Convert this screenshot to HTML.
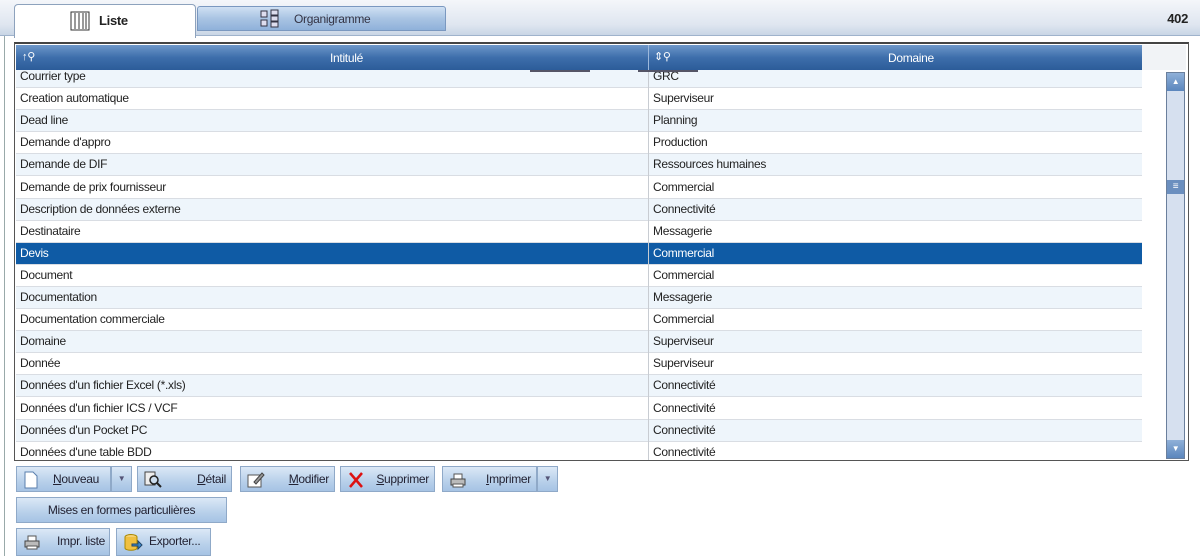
<!DOCTYPE html>
<html><head><meta charset="utf-8"><style>
*{margin:0;padding:0;box-sizing:border-box}
html,body{width:1200px;height:556px;overflow:hidden}
body{background:#fff;font-family:"Liberation Sans",Arial,sans-serif;font-size:12px;color:#222;position:relative;letter-spacing:-0.3px}
.abs{position:absolute;white-space:nowrap}
.bar{left:0;top:0;width:1200px;height:36px;background:linear-gradient(#f4f6fa,#dfe6f0 70%,#c9d6e6);border-bottom:1px solid #9fb3cc}
.tab1{left:14px;top:4px;width:182px;height:34px;background:#fff;border:1px solid #8da2bd;border-bottom:none;border-radius:4px 4px 0 0;font-weight:bold;font-size:13px}
.tab2{left:197px;top:6px;width:249px;height:25px;background:linear-gradient(#cfe0f3,#a9c4e3 50%,#8fb1da);border:1px solid #7a98c0;border-radius:3px 3px 0 0;color:#334;font-size:12px}
.frame{left:14px;top:42px;width:1175px;height:419px;border:1px solid #555;border-top:2px solid #444;background:#fff}
.hdr{left:16px;top:45px;width:1126px;height:25px;background:linear-gradient(#6e97c9,#3d6eab 50%,#2c5c99);color:#fff;font-size:12px;z-index:2}
.row{position:absolute;left:16px;width:1126px;height:22px;border-bottom:1px solid #d9dde3;line-height:21px;white-space:nowrap}
.row span{position:absolute;left:4px}
.row b{font-weight:normal;position:absolute;left:637px}
.row.a{background:#eef5fb}
.row.s{background:#0f5ba5;color:#fff}
.vline{left:648px;top:70px;width:1px;height:390px;background:#c8ccd2;z-index:1}
.btn{position:absolute;height:26px;background:linear-gradient(#dbe8f6,#b8d0ea 60%,#a6c3e4);border:1px solid #8fa9c8;font-size:12px;line-height:24px;color:#223;white-space:nowrap}
.btn span{white-space:nowrap}
.btn u{text-decoration:underline}
.btn svg{position:absolute;left:6px;top:4px}
</style></head><body>
<div class="abs" style="left:4px;top:30px;width:1px;height:526px;background:#9aa"></div>
<div class="abs bar"></div>
<div class="abs tab1"><svg class="abs" style="left:55px;top:6px" width="20" height="20"><rect x="1" y="1" width="18" height="18" fill="#fff" stroke="#333"/><path d="M5 2v16M9 2v16M13 2v16M16 2v16" stroke="#333"/></svg><span class="abs" style="left:84px;top:8px">Liste</span></div>
<div class="abs tab2"><svg class="abs" style="left:62px;top:2px" width="20" height="20"><rect x="1" y="2" width="6" height="6" fill="#dde" stroke="#334"/><rect x="1" y="11" width="6" height="6" fill="#dde" stroke="#334"/><rect x="11" y="1" width="7" height="5" fill="#dde" stroke="#334"/><rect x="11" y="7" width="7" height="5" fill="#dde" stroke="#334"/><rect x="11" y="13" width="7" height="5" fill="#dde" stroke="#334"/></svg><span class="abs" style="left:96px;top:5px">Organigramme</span></div>
<div class="abs" style="right:12px;top:11px;font-weight:bold;font-size:13px">402</div>
<div class="abs frame"></div>
<div class="abs hdr"><span class="abs" style="left:6px;top:5px;font-size:11px">↑⚲</span><span class="abs" style="left:314px;top:6px">Intitulé</span><div class="abs" style="left:632px;top:0;width:1px;height:25px;background:#9cb8dc"></div><span class="abs" style="left:638px;top:5px;font-size:11px">⇕⚲</span><span class="abs" style="left:872px;top:6px">Domaine</span></div>
<div class="abs" style="left:530px;top:70px;width:60px;height:2px;background:#556;z-index:3"></div>
<div class="abs" style="left:638px;top:70px;width:60px;height:2px;background:#556;z-index:3"></div>
<div class="abs" style="left:1142px;top:45px;width:44px;height:25px;background:#f1f3f6"></div>
<div class="abs vline"></div>
<div class="abs" style="left:0;top:66px;width:1200px;height:394px;overflow:hidden">
<div class="row a" style="top:0"><span>Courrier type</span><b>GRC</b></div>
<div class="row" style="top:22.1px"><span>Creation automatique</span><b>Superviseur</b></div>
<div class="row a" style="top:44.2px"><span>Dead line</span><b>Planning</b></div>
<div class="row" style="top:66.3px"><span>Demande d'appro</span><b>Production</b></div>
<div class="row a" style="top:88.4px"><span>Demande de DIF</span><b>Ressources humaines</b></div>
<div class="row" style="top:110.5px"><span>Demande de prix fournisseur</span><b>Commercial</b></div>
<div class="row a" style="top:132.6px"><span>Description de données externe</span><b>Connectivité</b></div>
<div class="row" style="top:154.7px"><span>Destinataire</span><b>Messagerie</b></div>
<div class="row s" style="top:176.8px"><span>Devis</span><b>Commercial</b></div>
<div class="row" style="top:198.9px"><span>Document</span><b>Commercial</b></div>
<div class="row a" style="top:221px"><span>Documentation</span><b>Messagerie</b></div>
<div class="row" style="top:243.1px"><span>Documentation commerciale</span><b>Commercial</b></div>
<div class="row a" style="top:265.2px"><span>Domaine</span><b>Superviseur</b></div>
<div class="row" style="top:287.3px"><span>Donnée</span><b>Superviseur</b></div>
<div class="row a" style="top:309.4px"><span>Données d'un fichier Excel (*.xls)</span><b>Connectivité</b></div>
<div class="row" style="top:331.5px"><span>Données d'un fichier ICS / VCF</span><b>Connectivité</b></div>
<div class="row a" style="top:353.6px"><span>Données d'un Pocket PC</span><b>Connectivité</b></div>
<div class="row" style="top:375.7px"><span>Données d'une table BDD</span><b>Connectivité</b></div>
</div>
<div class="abs" style="left:1166px;top:72px;width:19px;height:387px;background:#d6e0ef;border:1px solid #6a7f9c"></div>
<div class="abs" style="left:1167px;top:73px;width:17px;height:18px;background:linear-gradient(#8fb0d8,#5b86bd);color:#fff;font-size:8px;text-align:center;line-height:18px">▲</div>
<div class="abs" style="left:1167px;top:180px;width:17px;height:14px;background:#6b8fbf;color:#fff;font-size:10px;text-align:center;line-height:13px">≡</div>
<div class="abs" style="left:1167px;top:440px;width:17px;height:18px;background:linear-gradient(#8fb0d8,#5b86bd);color:#fff;font-size:8px;text-align:center;line-height:18px">▼</div>

<div class="btn" style="left:16px;top:466px;width:95px"><svg width="16" height="18"><path d="M2 1h8l4 4v12H2z" fill="#fff" stroke="#5a7fae"/></svg><span class="abs" style="left:36px"><u>N</u>ouveau</span></div>
<div class="btn" style="left:111px;top:466px;width:21px;text-align:center;font-size:8px;color:#557">▼</div>
<div class="btn" style="left:137px;top:466px;width:95px"><svg width="18" height="18"><rect x="1" y="1" width="10" height="13" fill="#eee" stroke="#444"/><circle cx="10" cy="9" r="4" fill="#cde" stroke="#222" stroke-width="1.5"/><path d="M13 12l4 4" stroke="#222" stroke-width="2"/></svg><span class="abs" style="right:5px"><u>D</u>étail</span></div>
<div class="btn" style="left:240px;top:466px;width:95px"><svg width="18" height="18"><rect x="1" y="4" width="13" height="12" fill="#fff" stroke="#555"/><path d="M7 11l8-9 2 2-8 9z" fill="#999" stroke="#444"/></svg><span class="abs" style="right:5px"><u>M</u>odifier</span></div>
<div class="btn" style="left:340px;top:466px;width:95px"><svg width="18" height="18"><path d="M3 2l12 14M15 2L3 16" stroke="#d11" stroke-width="2.5"/></svg><span class="abs" style="right:5px"><u>S</u>upprimer</span></div>
<div class="btn" style="left:442px;top:466px;width:95px"><svg width="18" height="18"><rect x="5" y="3" width="8" height="5" fill="#fff" stroke="#555"/><rect x="2" y="8" width="14" height="6" fill="#bbb" stroke="#444"/><rect x="4" y="13" width="10" height="3" fill="#fff" stroke="#555"/></svg><span class="abs" style="right:5px"><u>I</u>mprimer</span></div>
<div class="btn" style="left:537px;top:466px;width:21px;text-align:center;font-size:8px;color:#557">▼</div>
<div class="btn" style="left:16px;top:497px;width:211px;text-align:center">Mises en formes particulières</div>
<div class="btn" style="left:16px;top:528px;width:94px;height:28px"><svg width="18" height="18"><rect x="5" y="3" width="8" height="5" fill="#fff" stroke="#555"/><rect x="2" y="8" width="14" height="6" fill="#bbb" stroke="#444"/><rect x="4" y="13" width="10" height="3" fill="#fff" stroke="#555"/></svg><span class="abs" style="left:40px">Impr. liste</span></div>
<div class="btn" style="left:116px;top:528px;width:95px;height:28px"><svg width="20" height="20"><ellipse cx="8" cy="4" rx="6" ry="2.5" fill="#f5d070" stroke="#a80"/><path d="M2 4v11c0 3 12 3 12 0V4" fill="#f0c040" stroke="#a80"/><path d="M9 11h6v-3l4 4-4 4v-3H9z" fill="#3a8ad0" stroke="#246"/></svg><span class="abs" style="left:32px">Exporter...</span></div>
</body></html>
